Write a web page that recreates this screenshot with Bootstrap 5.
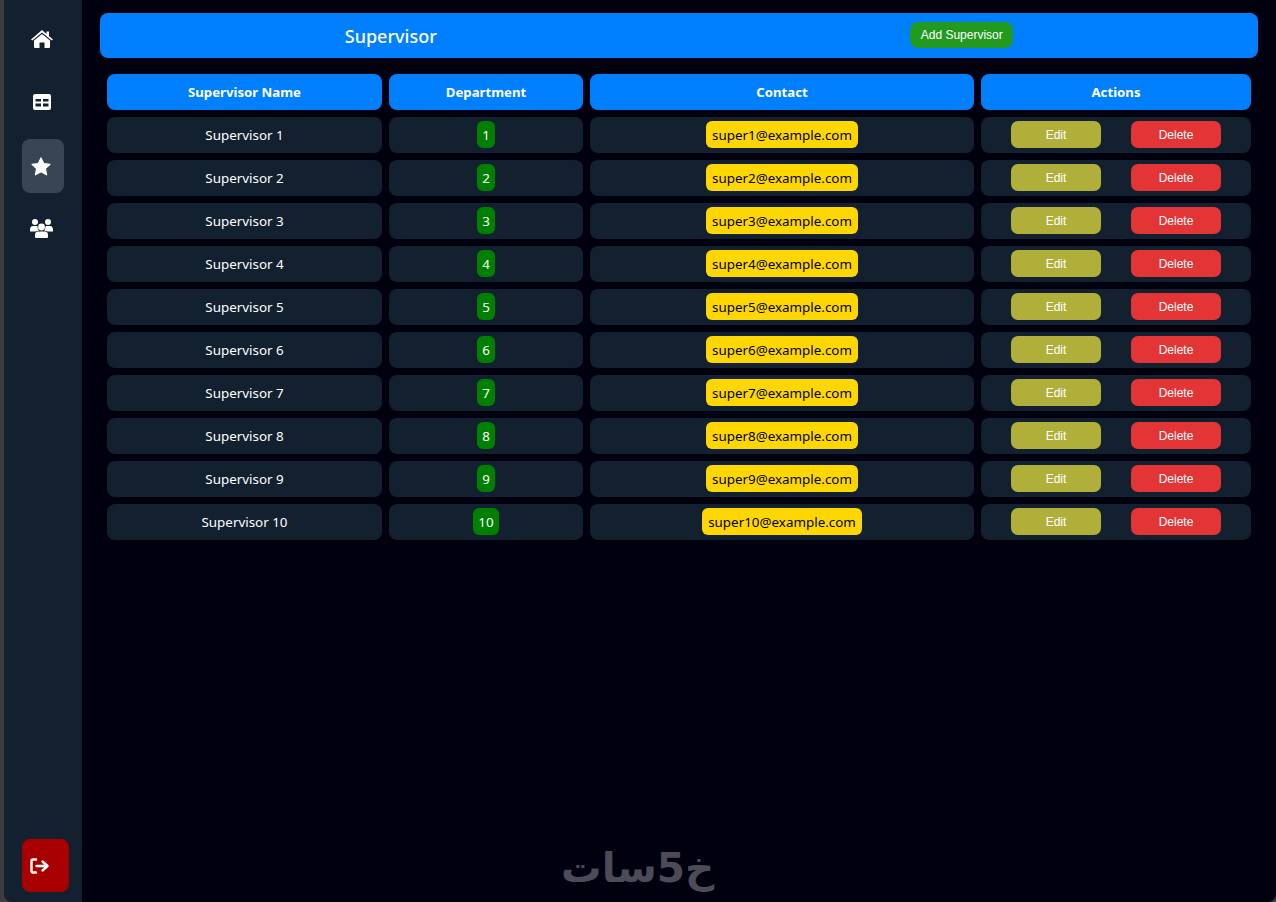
<!DOCTYPE html>
<html lang="en">

<head>
  <meta charset="UTF-8">
  <meta name="viewport" content="width=device-width, initial-scale=1.0">
  <title>Supervisor</title>
  <link href="https://cdn.jsdelivr.net/npm/bootstrap@5.3.3/dist/css/bootstrap.min.css" rel="stylesheet" />
  <style>
    html, body { height: 100%; }
    body { background: #3d3d3d; color: #fff; font-family: "Noto Sans", "Liberation Sans", sans-serif; overflow: hidden; }
    .app-shell { height: 902px; padding-left: 4px; }
    .side-rail { width: 78px; background: #12202f; border-bottom-left-radius: 8px; padding: 13px 0 10px 18px; flex-shrink: 0; }
    .rail-link { width: 42px; height: 54px; margin-bottom: 9px; padding: 0 3px 2px 0; border-radius: 8px; color: #fff; }
    .rail-logout { width: 47px; height: 53px; border-radius: 8px; background: #a80000; color: #fff; }
    .rail-link.is-active { background: #374554; padding-bottom: 0; padding-right: 4px; }
    .main-pane { background: #00000f; padding: 13px 18px 0; min-width: 0; border-bottom-right-radius: 8px; }
    .title-bar { background: #007fff; height: 45px; border-radius: 8px; }
    .title-text { font-size: 18px; font-weight: 500; padding-top: 2px; }
    .add-btn { background: #229a1f; color: #fff; border: 0; border-radius: 8px; height: 26px; width: 103px; padding: 0; margin-bottom: 2px; font: 12px "Liberation Sans", sans-serif; }
    .staff-table { width: 1158px; table-layout: fixed; border-collapse: separate; border-spacing: 7px; margin-top: 9px; font-size: 13.4px; }
    .col-name { width: 275px; }
    .col-dept { width: 194px; }
    .col-contact { width: 384px; }
    .col-actions { width: 270px; }
    .staff-table th { background: #007fff; height: 36px; border-radius: 8px; font-size: 13.2px; font-weight: 700; text-align: center; padding: 1px 0 0; }
    .staff-table td { background: #12202f; height: 36px; border-radius: 8px; text-align: center; padding: 0 0 1px; line-height: 27px; }
    .staff-table td.name-cell { padding: 1px 0 0; }
    .dept-tag { display: inline-block; vertical-align: top; background: #008000; height: 27px; line-height: 29px; padding: 0 5px; border-radius: 6px; }
    .mail-tag { display: inline-block; vertical-align: top; background: #ffd700; color: #000; height: 27px; line-height: 29px; padding: 0 6px; border-radius: 6px; }
    .act-btn { width: 90px; height: 27px; padding: 0; border: 0; border-radius: 7px; color: #fff; font: 12px "Liberation Sans", sans-serif; }
    .act-edit { background: #afaf3a; }
    .act-del { background: #e33535; }
    .act-row { padding: 0 30px; }
    .brand-mark { height: 52px; margin-left: 461px; margin-bottom: 8px; color: #4b4c57; font: 700 40.5px "DejaVu Sans", sans-serif; line-height: 52px; white-space: nowrap; }
  </style>
</head>

<body>
  <div class="app-shell d-flex">
    <nav class="side-rail d-flex flex-column">
      <a class="rail-link d-flex align-items-center justify-content-center" href="#">
        <svg width="22" height="18" viewBox="0 0 22 18" fill="#fff"><path d="M11 0 L15.5 3.9 V1.5 H18 V6.1 L22 9.6 L20.7 10.6 L11 2.6 L1.3 10.6 L0 9.6Z"/><path d="M11 4 L19 10.6 V17 Q19 18 18 18 H13.5 V12.5 H8.5 V18 H4 Q3 18 3 17 V10.6Z"/></svg>
      </a>
      <a class="rail-link d-flex align-items-center justify-content-center" href="#">
        <svg width="18" height="16" viewBox="0 0 18 16" fill="#fff" fill-rule="evenodd"><path d="M2 0 H16 Q18 0 18 2 V14 Q18 16 16 16 H2 Q0 16 0 14 V2 Q0 0 2 0Z M2.5 5 V7.5 H8 V5Z M10 5 V7.5 H15.5 V5Z M2.5 9.5 V12.5 H8 V9.5Z M10 9.5 V12.5 H15.5 V9.5Z"/></svg>
      </a>
      <a class="rail-link is-active d-flex align-items-center justify-content-center" href="#">
        <svg width="20" height="19" viewBox="0 0 20 19" fill="#fff" stroke="#fff" stroke-width="1.2" stroke-linejoin="round"><path d="M10 1 L12.7 6.5 L19 7.3 L14.4 11.6 L15.6 17.8 L10 14.8 L4.4 17.8 L5.6 11.6 L1 7.3 L7.3 6.5Z"/></svg>
      </a>
      <a class="rail-link d-flex align-items-center justify-content-center" href="#">
        <svg width="23" height="19" viewBox="0 0 23 19" fill="#fff"><circle cx="5" cy="3" r="3"/><circle cx="18" cy="3" r="3"/><circle cx="11.5" cy="8" r="3.4"/><path d="M0 11 Q0 7 3 7 H7 Q7.5 7 7.6 8 Q7.5 10 9 11.5 Q6.4 12 5.6 12.5 H0Z"/><path d="M23 11 Q23 7 20 7 H16 Q15.5 7 15.4 8 Q15.5 10 14 11.5 Q16.6 12 17.4 12.5 H23Z"/><path d="M8 12.5 H15 Q18 12.5 18 16 V18 Q18 19 17 19 H6 Q5 19 5 18 V16 Q5 12.5 8 12.5Z"/></svg>
      </a>
      <a class="rail-logout mt-auto d-flex align-items-center" href="#">
        <svg class="ms-2" width="20" height="16" viewBox="0 0 20 16" fill="none" stroke="#fff" stroke-width="2.4" stroke-linecap="round" stroke-linejoin="round"><path d="M6 1.5 H3 Q1.5 1.5 1.5 3 V13 Q1.5 14.5 3 14.5 H6"/><path d="M6.5 8 H17 M12.5 3.5 L17.5 8 L12.5 12.5"/></svg>
      </a>
    </nav>

    <main class="main-pane flex-grow-1 d-flex flex-column">
      <div class="title-bar d-flex align-items-center justify-content-around px-2">
        <span class="title-text">Supervisor</span>
        <button class="add-btn" type="button">Add Supervisor</button>
      </div>

      <table class="staff-table">
        <colgroup>
          <col class="col-name"><col class="col-dept"><col class="col-contact"><col class="col-actions">
        </colgroup>
        <thead>
          <tr><th>Supervisor Name</th><th>Department</th><th>Contact</th><th>Actions</th></tr>
        </thead>
        <tbody id="rows"></tbody>
      </table>

      <div class="brand-mark mt-auto align-self-start" dir="rtl" lang="ar">خ5سات</div>
    </main>
  </div>

  <script>
    let tbl = "";
    for (let i = 1; i <= 10; i++) {
      tbl += `
        <tr>
          <td class="name-cell">Supervisor ${i}</td>
          <td><span class="dept-tag">${i}</span></td>
          <td><span class="mail-tag">super${i}@example.com</span></td>
          <td><div class="act-row d-flex justify-content-between">
            <button class="act-btn act-edit" type="button">Edit</button>
            <button class="act-btn act-del" type="button">Delete</button>
          </div></td>
        </tr>`;
    }
    document.getElementById("rows").innerHTML = tbl;
  </script>
  <script src="https://cdn.jsdelivr.net/npm/bootstrap@5.3.3/dist/js/bootstrap.bundle.min.js"></script>
</body>

</html>
